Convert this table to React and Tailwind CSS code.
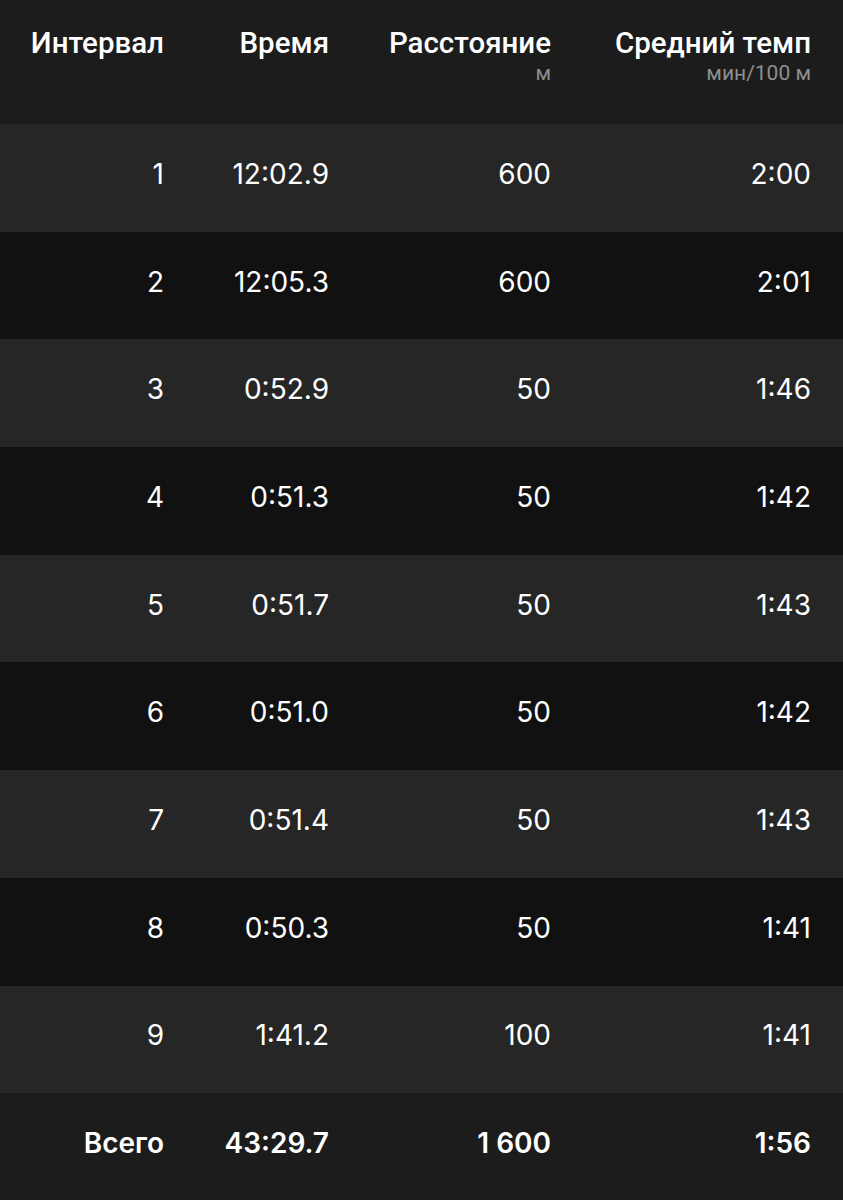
import React from 'react';

const rows = [
  ['1', '12:02.9', '600', '2:00'],
  ['2', '12:05.3', '600', '2:01'],
  ['3', '0:52.9', '50', '1:46'],
  ['4', '0:51.3', '50', '1:42'],
  ['5', '0:51.7', '50', '1:43'],
  ['6', '0:51.0', '50', '1:42'],
  ['7', '0:51.4', '50', '1:43'],
  ['8', '0:50.3', '50', '1:41'],
  ['9', '1:41.2', '100', '1:41'],
];

const widths = ['w-[164px]', 'w-[165px]', 'w-[222px]', 'w-[260px]'];

// column widths follow the right edges in the reference: 164 / 329 / 551 / 811
function Cells({ cells, className }) {
  return cells.map((c, i) => (
    <div key={i} className={`${widths[i]} text-right ${className}`}>
      {c}
    </div>
  ));
}

export default function App() {
  return (
    <div className="w-[843px] h-[1200px] overflow-hidden bg-[#1c1c1c] text-white font-['Inter',sans-serif]">
      {/* header */}
      <div className="h-[124px] flex pr-[32px] pt-[25px] bg-[#1c1c1c]">
        {[
          ['Интервал', ''],
          ['Время', ''],
          ['Расстояние', 'м'],
          ['Средний темп', 'мин/100 м'],
        ].map(([title, unit], i) => (
          <div key={title} className={`${widths[i]} flex flex-col items-end`}>
            <span className="text-[29.5px] leading-[37px] font-medium font-['Roboto',sans-serif]">
              {title}
            </span>
            {unit && (
              <span className="text-[21px] leading-[22px] text-[#8e8e8e] font-['Roboto',sans-serif]">
                {unit}
              </span>
            )}
          </div>
        ))}
      </div>

      {rows.map((r, i) => (
        <div
          key={r[0]}
          className={`h-[107.7px] flex items-center pr-[32px] pb-[8px] ${i % 2 === 0 ? 'bg-[#262626]' : 'bg-[#111111]'}`}
        >
          <Cells cells={r} className="text-[28px] leading-[34px]" />
        </div>
      ))}

      <div className="h-[107px] flex items-center pr-[32px] pb-[8px] bg-[#1c1c1c]">
        <Cells cells={['Всего', '43:29.7', '1 600', '1:56']} className="text-[28px] leading-[34px] font-semibold" />
      </div>
    </div>
  );
}
